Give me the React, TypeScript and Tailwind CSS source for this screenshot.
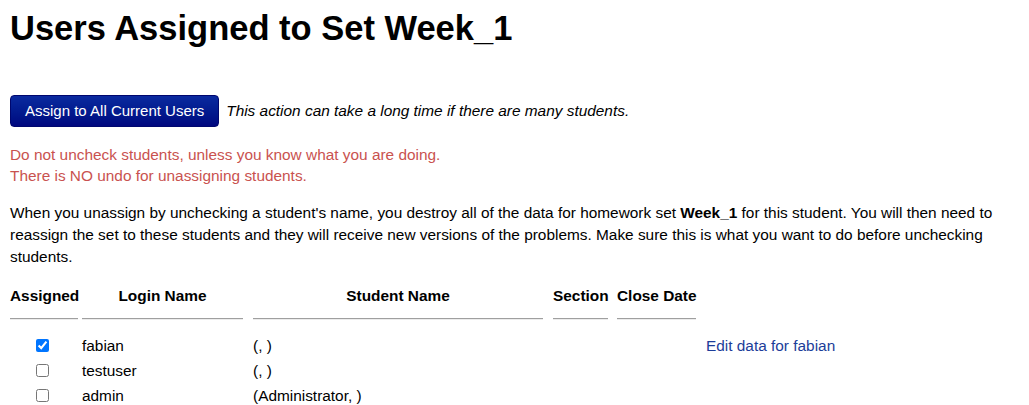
type Student = {
  login: string;
  name: string;
  assigned: boolean;
};

const students: Student[] = [
  { login: "fabian", name: "(, )", assigned: true },
  { login: "testuser", name: "(, )", assigned: false },
  { login: "admin", name: "(Administrator, )", assigned: false },
];

const cols = "grid grid-cols-[72px_171px_300px_64px_89px_1fr]";

function HeaderCell({ label, pad, align = "center" }: { label: string; pad: string; align?: "left" | "center" }) {
  return (
    <div className={pad}>
      <div
        className={`whitespace-nowrap font-bold leading-[22px] ${align === "left" ? "text-left" : "text-center"}`}
      >
        {label}
      </div>
      <div className="mt-[11px] h-[2px] border-t border-[#9f9f9f] border-b border-b-[#ececec]" />
    </div>
  );
}

export default function App() {
  return (
    <div className="min-h-[405px] bg-white pl-[10px] pr-[10px] font-['Liberation_Sans',Arial,sans-serif] text-[15.4px] text-black">
      <h1 className="pt-[7px] text-[34.5px] font-bold leading-[42px]">Users Assigned to Set Week_1</h1>

      <div className="mt-[46px] flex items-center gap-[7px]">
        <button className="h-[32px] rounded-[4px] border border-[#00076e] bg-gradient-to-b from-[#0b2a9f] to-[#00077f] px-[14px] text-[15px] text-white">
          Assign to All Current Users
        </button>
        <span className="italic">This action can take a long time if there are many students.</span>
      </div>

      <div className="mt-[17px] leading-[21px] text-[#c9524f]">
        <div>Do not uncheck students, unless you know what you are doing.</div>
        <div>There is NO undo for unassigning students.</div>
      </div>

      <p className="mt-[16px] leading-[22px]">
        When you unassign by unchecking a student's name, you destroy all of the data for homework set{" "}
        <b>Week_1</b> for this student. You will then need to reassign the set to these students and they will
        receive new versions of the problems. Make sure this is what you want to do before unchecking students.
      </p>

      <div className={`mt-[17px] ${cols}`}>
        <HeaderCell label="Assigned" pad="pr-[4px]" align="left" />
        <HeaderCell label="Login Name" pad="pr-[10px]" />
        <HeaderCell label="Student Name" pad="pr-[10px]" />
        <HeaderCell label="Section" pad="pr-[9px]" />
        <HeaderCell label="Close Date" pad="pr-[10px]" />
        <div />
      </div>

      <div className="mt-[13px]">
        {students.map((s) => (
          <div key={s.login} className={`${cols} h-[25px] items-center`}>
            <div className="pl-[26px] flex items-center">
              <input type="checkbox" defaultChecked={s.assigned} className="m-0 h-[13px] w-[13px]" />
            </div>
            <div>{s.login}</div>
            <div>{s.name}</div>
            <div />
            <div />
            <div>
              {s.assigned && (
                <a href="#" className="text-[#1c3d99]">
                  Edit data for {s.login}
                </a>
              )}
            </div>
          </div>
        ))}
      </div>
    </div>
  );
}
